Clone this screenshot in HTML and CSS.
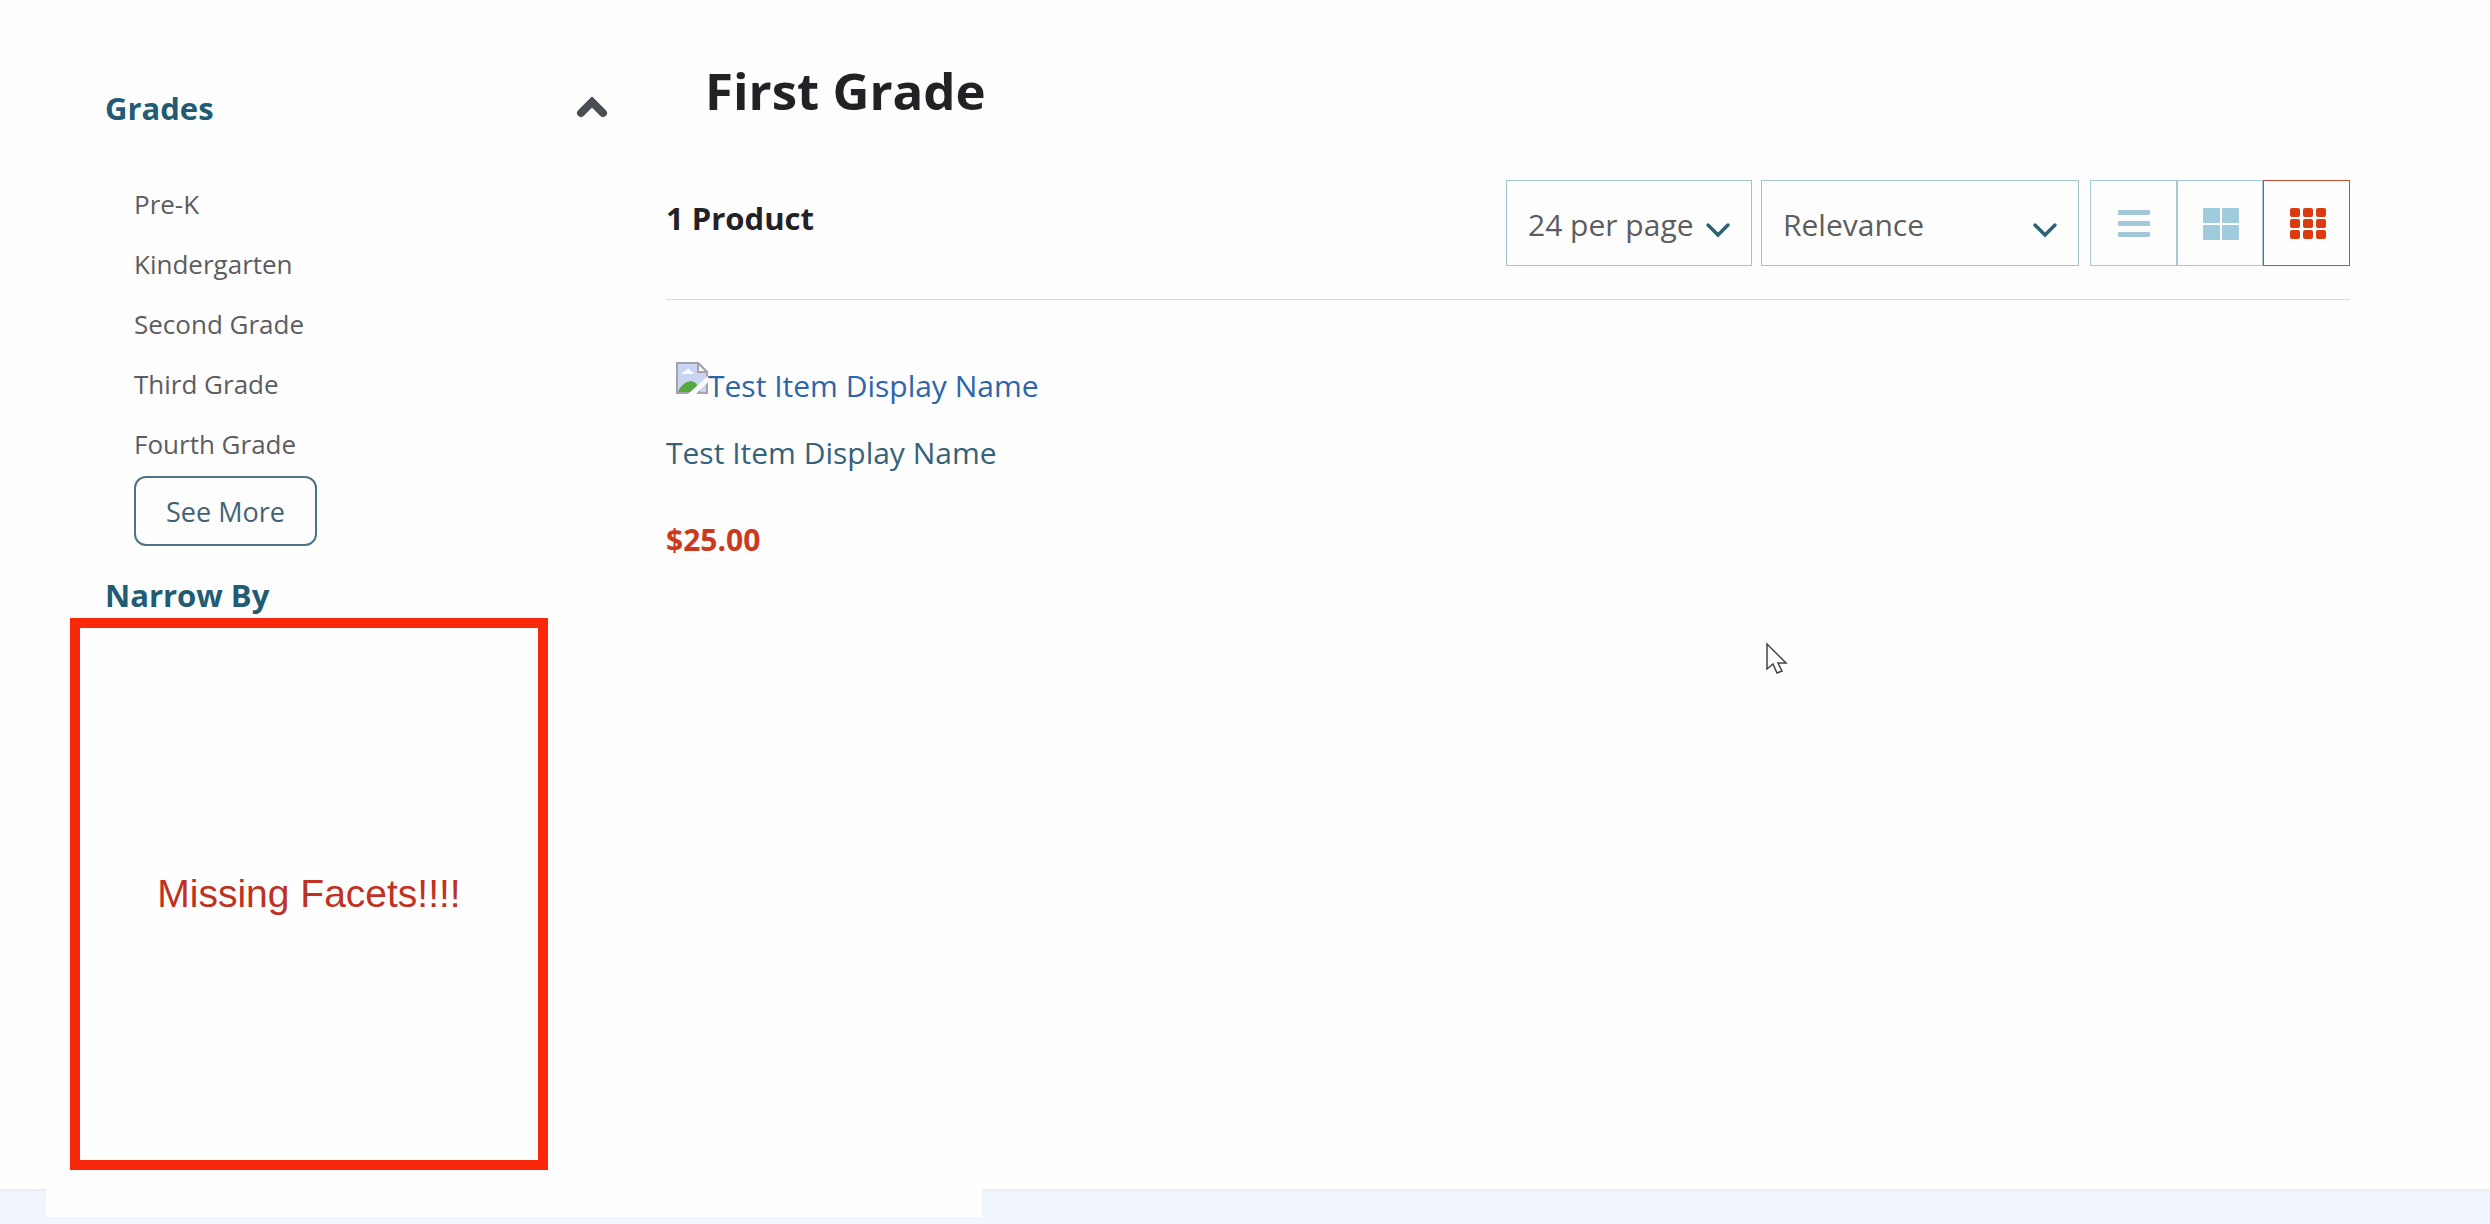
FILE: index.html
```html
<!DOCTYPE html>
<html lang="en">
<head>
  <meta charset="UTF-8" />
  <title>First Grade</title>
  <link rel="stylesheet" href="styles.css">
</head>
<body>
  <div class="page">
    <aside class="sidebar">
      <div class="facet-header">
        <h2>Grades</h2>
        <button class="collapse-btn" type="button" aria-label="Collapse Grades">
          <svg width="32" height="22" viewBox="0 0 32 22"><path d="M5 16 L16 5 L27 16" fill="none" stroke="#4b4d54" stroke-width="8" stroke-linecap="round" /></svg>
        </button>
      </div>
      <ul class="grade-list">
        <li><a href="#">Pre-K</a></li>
        <li><a href="#">Kindergarten</a></li>
        <li><a href="#">Second Grade</a></li>
        <li><a href="#">Third Grade</a></li>
        <li><a href="#">Fourth Grade</a></li>
      </ul>
      <button class="see-more" type="button">See More</button>
      <div class="narrow">
        <h2>Narrow By</h2>
        <div class="annotation">Missing Facets!!!!</div>
      </div>
    </aside>

    <main class="content">
      <h1>First Grade</h1>
      <div class="toolbar">
        <h3 class="count">1 Product</h3>
        <div class="controls">
          <div class="select-wrap per-page">
            <select aria-label="Items per page">
              <option>24 per page</option>
            </select>
            <svg class="chevron" width="26" height="16" viewBox="0 0 26 16"><path d="M3 3 L13 13 L23 3" fill="none" stroke="#2b6275" stroke-width="3.5" stroke-linecap="round" /></svg>
          </div>
          <div class="select-wrap sort">
            <select aria-label="Sort by">
              <option>Relevance</option>
            </select>
            <svg class="chevron" width="26" height="16" viewBox="0 0 26 16"><path d="M3 3 L13 13 L23 3" fill="none" stroke="#2b6275" stroke-width="3.5" stroke-linecap="round" /></svg>
          </div>
          <div class="views">
            <button type="button" aria-label="List">
              <svg width="36" height="32" viewBox="0 0 36 32" fill="#a3c8d8"><rect x="2" y="2" width="32" height="5" rx="1" /><rect x="2" y="13" width="32" height="5" rx="1" /><rect x="2" y="24" width="32" height="5" rx="1" /></svg>
            </button>
            <button type="button" aria-label="Two column grid">
              <svg width="36" height="32" viewBox="0 0 36 32" fill="#9fcbdd"><rect width="17" height="15" rx="1" /><rect x="19" width="17" height="15" rx="1" /><rect y="17" width="17" height="15" rx="1" /><rect x="19" y="17" width="17" height="15" rx="1" /></svg>
            </button>
            <button class="active" type="button" aria-label="Three column grid">
              <svg width="36" height="32" viewBox="0 0 36 32" fill="#dc3a10"><rect width="10" height="9" rx="2" /><rect x="13" width="10" height="9" rx="2" /><rect x="26" width="10" height="9" rx="2" /><rect y="11" width="10" height="9" rx="2" /><rect x="13" y="11" width="10" height="9" rx="2" /><rect x="26" y="11" width="10" height="9" rx="2" /><rect y="22" width="10" height="9" rx="2" /><rect x="13" y="22" width="10" height="9" rx="2" /><rect x="26" y="22" width="10" height="9" rx="2" /></svg>
            </button>
          </div>
        </div>
      </div>

      <div class="product">
        <a class="thumb" href="#">
          <svg width="32" height="32" viewBox="0 0 32 32">
            <path d="M1 1 H22 L31 10 V31 H1 Z" fill="#c9d5f2" stroke="#a3a3a8" stroke-width="2" />
            <path d="M6 12 Q7 9 10 9 Q12 4 14 9 Q17 9 17 12 Z" fill="#fff" />
            <path d="M2 30 Q6 20 15 19 Q22 20 24 30 Z" fill="#54a83c" />
            <path d="M22 1 V10 H31 Z" fill="#fff" stroke="#a3a3a8" stroke-width="2" />
            <path d="M12 32 L32 14 V20 L20 32 Z" fill="#fefefe" />
          </svg>
          <span>Test Item Display Name</span>
        </a>
        <a class="name" href="#">Test Item Display Name</a>
        <p class="price">$25.00</p>
      </div>
    </main>
  </div>

  <footer class="footer">
    <div class="footer-cover"></div>
  </footer>

  <svg class="cursor" width="24" height="34" viewBox="0 0 24 34"><path d="M2 2 V27 L8 22 L12 31 L17 29 L13 21 H21 Z" fill="#fff" stroke="#444" stroke-width="1.5" /></svg>
</body>
</html>
```
FILE: styles.css
```css
* {
  box-sizing: border-box;
}

body {
  font-family: 'Open Sans', sans-serif;
  font-size: 30px;
  line-height: 40px;
  margin: 0;
  min-height: 100vh;
  background: #fefefe;
  color: #222226;
  display: flex;
  flex-direction: column;
  position: relative;
}

h1, h2, h3, p, ul {
  margin: 0;
  padding: 0;
}

a {
  text-decoration: none;
}

button, select {
  font-family: inherit;
  cursor: pointer;
}

.page {
  flex: 1;
  display: flex;
  gap: 58px;
  padding: 60px 140px 0 105px;
}

.sidebar {
  width: 503px;
  flex-shrink: 0;
}

.sidebar h2 {
  font-size: 31px;
  line-height: 40px;
  color: #225b73;
}

.facet-header {
  display: flex;
  justify-content: space-between;
  align-items: center;
  padding-top: 28px;
}

.collapse-btn {
  display: flex;
  padding: 0;
  border: none;
  background: none;
}

.grade-list {
  list-style: none;
  margin: 46px 0 0 29px;
}

.grade-list li {
  font-size: 26px;
  line-height: 60px;
}

.grade-list a {
  color: #5c5c61;
}

.see-more {
  display: block;
  height: 70px;
  margin: 2px 0 0 29px;
  padding: 0 30px;
  border: 2px solid #4b7487;
  border-radius: 12px;
  background: #fefefe;
  color: #426277;
  font-size: 27px;
}

.narrow {
  position: relative;
  margin-top: 29px;
}

.annotation {
  position: absolute;
  top: 43px;
  left: -35px;
  width: 478px;
  height: 552px;
  border: 10px solid #fa280a;
  display: flex;
  align-items: center;
  justify-content: center;
  font-family: 'Liberation Sans', sans-serif;
  font-size: 39px;
  color: #c0311f;
}

.content {
  flex: 1;
}

h1 {
  font-size: 51px;
  line-height: 60px;
  padding-left: 39px;
}

.toolbar {
  display: flex;
  justify-content: space-between;
  margin-top: 60px;
  padding-bottom: 33px;
  border-bottom: 1px solid #d3dde1;
}

.count {
  font-size: 31px;
  line-height: 76px;
}

.controls {
  display: flex;
}

.select-wrap {
  position: relative;
  margin-right: 9px;
}

.select-wrap select {
  appearance: none;
  width: 100%;
  height: 86px;
  padding: 2px 20px 0 21px;
  border: 1px solid #a3c3cf;
  border-radius: 0;
  background: #fefefe;
  color: #5c5c61;
  font-size: 30px;
}

.per-page {
  width: 246px;
}

.sort {
  width: 318px;
  margin-right: 11px;
}

.chevron {
  position: absolute;
  right: 21px;
  top: 42px;
  pointer-events: none;
}

.views {
  display: flex;
  width: 260px;
}

.views button {
  flex: 1;
  display: flex;
  align-items: center;
  justify-content: center;
  height: 86px;
  padding: 2px 0 0 2px;
  border: 1px solid #a3c8d8;
  background: #fefefe;
}

.views .active {
  border-color: #cf4a31;
}

.product {
  display: flex;
  flex-direction: column;
  align-items: flex-start;
}

.thumb {
  display: flex;
  margin: 62px 0 0 10px;
  color: #2c65ab;
}

.thumb span {
  padding-top: 4px;
}

.name {
  margin-top: 27px;
  color: #36627a;
}

.price {
  margin-top: 47px;
  font-weight: bold;
  color: #cb3a1d;
}

.footer {
  position: relative;
  height: 35px;
  border-top: 2px solid #e9ecf1;
  background: #f1f5fe;
}

/* white panel laid over the footer strip */
.footer-cover {
  position: absolute;
  top: -2px;
  left: 46px;
  width: 936px;
  height: 28px;
  background: #fefefe;
}

.cursor {
  position: absolute;
  left: 1765px;
  top: 642px;
}
```
